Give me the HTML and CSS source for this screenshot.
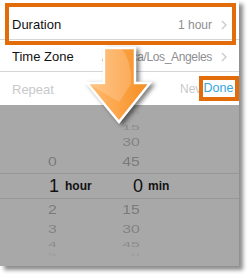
FILE: index.html
```html
<!DOCTYPE html>
<html>
<head>
<meta charset="utf-8">
<link rel="stylesheet" href="styles.css">
</head>
<body>
<div class="card">
  <div class="rows">
    <div class="row row-first">
      <span class="label">Duration</span>
      <span class="value">1 hour</span>
      <svg class="chev" viewBox="0 0 6 10" width="6" height="10"><path d="M1 1 L5 5 L1 9" fill="none" stroke="#c7c7cc" stroke-width="1.2"/></svg>
    </div>
    <div class="row row-mid">
      <span class="label">Time Zone</span>
      <span class="value tz">America/Los_Angeles</span>
      <svg class="chev" viewBox="0 0 6 10" width="6" height="10"><path d="M1 1 L5 5 L1 9" fill="none" stroke="#c7c7cc" stroke-width="1.2"/></svg>
    </div>
    <div class="row row-last">
      <span class="label dim">Repeat</span>
      <span class="value dim">Never</span>
      <svg class="chev" viewBox="0 0 6 10" width="6" height="10"><path d="M1 1 L5 5 L1 9" fill="none" stroke="#e0e0e0" stroke-width="1.2"/></svg>
    </div>
  </div>
  <div class="picker">
    <div class="prow r1"><span class="h"></span><span class="hl"></span><span class="m"><i>0</i></span><span class="ml"></span></div>
    <div class="prow r2"><span class="h"></span><span class="hl"></span><span class="m"><i>15</i></span><span class="ml"></span></div>
    <div class="prow r3"><span class="h"></span><span class="hl"></span><span class="m"><i>30</i></span><span class="ml"></span></div>
    <div class="prow r4"><span class="h"><i>0</i></span><span class="hl"></span><span class="m"><i>45</i></span><span class="ml"></span></div>
    <div class="prow sel"><span class="h"><i>1</i></span><span class="hl">hour</span><span class="m"><i>0</i></span><span class="ml">min</span></div>
    <div class="prow r4"><span class="h"><i>2</i></span><span class="hl"></span><span class="m"><i>15</i></span><span class="ml"></span></div>
    <div class="prow r3"><span class="h"><i>3</i></span><span class="hl"></span><span class="m"><i>30</i></span><span class="ml"></span></div>
    <div class="prow r7"><span class="h"><i>4</i></span><span class="hl"></span><span class="m"><i>45</i></span><span class="ml"></span></div>
    <div class="prow r8"><span class="h"><i>5</i></span><span class="hl"></span><span class="m"><i>0</i></span><span class="ml"></span></div>
  </div>
  <div class="callout callout-duration"></div>
  <div class="callout callout-done">Done</div>
  <svg class="arrow" viewBox="0 0 80 90" width="80" height="90">
    <defs>
      <linearGradient id="ag" x1="0" y1="0" x2="1" y2="0">
        <stop offset="0" stop-color="#ffbd72"/>
        <stop offset="0.5" stop-color="#fca448"/>
        <stop offset="1" stop-color="#f38c1f"/>
      </linearGradient>
    </defs>
    <polygon points="24,4 55,4 55,39 70,39 39,78 7,39 24,39" fill="url(#ag)" stroke="#ffffff" stroke-width="2.5"/>
    <path d="M25.5 5.5 L42 5.5 Q52 18 51 40 L39 58 L10 40.5 L25.5 40.5 Z" fill="#ffffff" opacity="0.18"/>
  </svg>
</div>
</body>
</html>
```
FILE: styles.css
```css
html, body {
  margin: 0;
  padding: 0;
  background: #ffffff;
}
body {
  width: 251px;
  height: 278px;
  overflow: hidden;
  font-family: "Liberation Sans", Arial, sans-serif;
}
.card {
  position: relative;
  width: 239px;
  height: 266px;
  background: #ffffff;
  box-shadow: 4px 4px 4px rgba(0, 0, 0, 0.45);
  display: flex;
  flex-direction: column;
}
.rows {
  display: flex;
  flex-direction: column;
}
.row {
  box-sizing: border-box;
  display: flex;
  align-items: center;
  padding: 0 12px 0 12px;
  font-size: 13px;
  color: #111;
}
.row-first {
  height: 40px;
  padding-top: 10px;
  border-bottom: 1px solid #d6d6da;
}
.row-mid {
  height: 32px;
  padding-top: 2px;
  border-bottom: 1px solid #d6d6da;
}
.row-last {
  height: 33px;
  padding-top: 1px;
}
.label {
  flex: 1;
}
.value {
  font-size: 12px;
  color: #8e8e93;
  margin-right: 9px;
}
.tz {
  letter-spacing: -0.35px;
}
.dim {
  color: #c8c8cc;
}
.chev {
  display: block;
  width: 6px;
  height: 10px;
}
.picker {
  height: 161px;
  background: #a8a8a8;
  display: flex;
  flex-direction: column;
  overflow: hidden;
}
.prow {
  display: grid;
  grid-template-columns: 57px 48px 35px 1fr;
  font-size: 16px;
  color: #767676;
}
.prow .h, .prow .m {
  text-align: right;
}
.prow i {
  font-style: normal;
  display: inline-block;
}
.prow .hl, .prow .ml {
  padding-left: 8px;
  font-size: 12px;
  font-weight: bold;
  color: #111;
}
.r1 { height: 15px; line-height: 15px; color: #9a9a9a; }
.r1 i { transform: scaleY(0.25); }
.r2 { height: 14px; line-height: 14px; color: #8c8c8c; }
.r2 i { transform: scaleY(0.5); }
.r3 { height: 17px; line-height: 17px; color: #828282; }
.r3 i { transform: scaleY(0.66); }
.r4 { height: 22px; line-height: 22px; color: #7a7a7a; }
.r4 i { transform: scaleY(0.8); }
.r7 { height: 13px; line-height: 13px; color: #8c8c8c; }
.r7 i { transform: scaleY(0.42); }
.r8 { height: 8px; line-height: 8px; color: #9c9c9c; }
.r8 i { transform: scaleY(0.18); }
.sel {
  box-sizing: border-box;
  height: 26px;
  line-height: 24px;
  border-top: 1px solid #979797;
  border-bottom: 1px solid #979797;
  color: #111;
}
.sel .h i, .sel .m i {
  font-size: 18px;
}
.sel .h i { margin-right: -2px; }
.sel .m i { margin-right: -3px; }
.callout {
  position: absolute;
  box-sizing: border-box;
  border: 4px solid #e36c0a;
}
.callout-duration {
  left: 5px;
  top: 3px;
  width: 231px;
  height: 42px;
}
.callout-done {
  left: 199px;
  top: 76px;
  width: 40px;
  height: 25px;
  background: #ffffff;
  color: #34a6e0;
  font-size: 12.5px;
  line-height: 17px;
  text-align: center;
  padding-right: 1px;
}
.arrow {
  position: absolute;
  left: 80px;
  top: 44px;
  filter: drop-shadow(3px 2px 2px rgba(0, 0, 0, 0.5));
}
```
